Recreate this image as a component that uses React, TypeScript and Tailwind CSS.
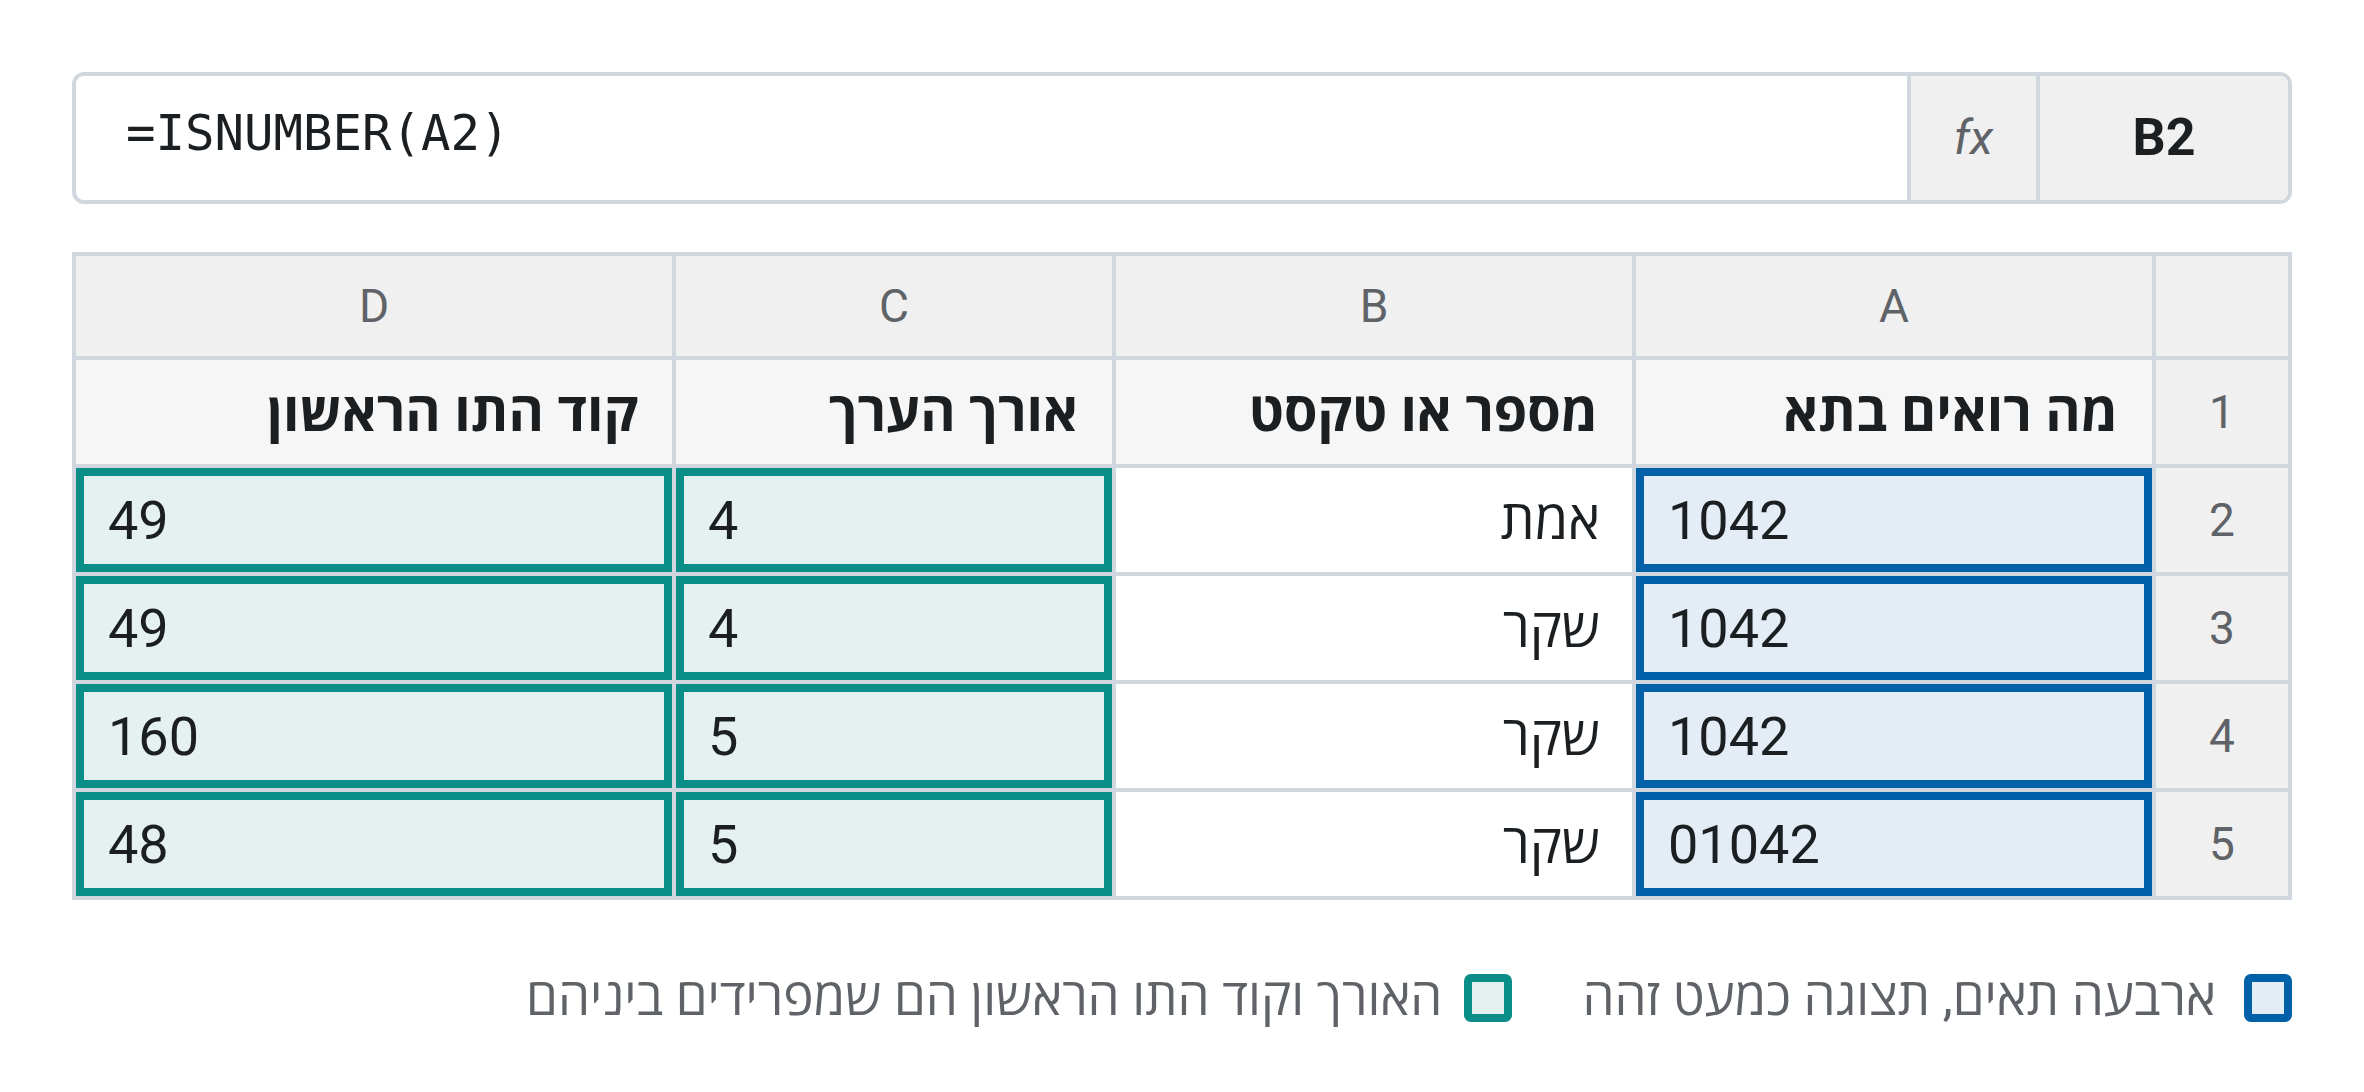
const teal = "border-[8px] border-[#0b8e88] bg-[#e5f1f1]";
const blue = "border-[8px] border-[#0061a8] bg-[#e4ecf5]";

type Row = { n: number; a: string; b: string; c: string; d: string };

const rows: Row[] = [
  { n: 2, a: "1042", b: "אמת", c: "4", d: "49" },
  { n: 3, a: "1042", b: "שקר", c: "4", d: "49" },
  { n: 4, a: "1042", b: "שקר", c: "5", d: "160" },
  { n: 5, a: "01042", b: "שקר", c: "5", d: "48" },
];

const letters = ["A", "B", "C", "D"];
const titles = ["מה רואים בתא", "מספר או טקסט", "אורך הערך", "קוד התו הראשון"];

export default function App() {
  return (
    <div
      dir="rtl"
      className="min-h-screen bg-white px-[72px] pt-[72px] font-['Roboto','Open_Sans',sans-serif] text-[#1b1f22]"
    >
      {/* formula bar */}
      <div className="flex h-[132px] overflow-hidden rounded-[12px] border-[4px] border-[#d0d7de]">
        <div className="flex w-[252px] items-center justify-center border-l-[4px] border-[#d0d7de] bg-[#f0f0f0] text-[52px] font-bold">
          B2
        </div>
        <div className="flex w-[129px] items-center justify-center border-l-[4px] border-[#d0d7de] bg-[#f0f0f0] text-[48px] italic text-[#5f6368]">
          fx
        </div>
        <div
          dir="ltr"
          className="flex flex-1 items-center pb-[8px] pl-[50px] font-['DejaVu_Sans_Mono',monospace] text-[49px]"
        >
          =ISNUMBER(A2)
        </div>
      </div>

      {/* sheet */}
      <div className="mt-[48px] grid grid-cols-[132px_516px_516px_436px_596px] grid-rows-[100px_repeat(5,104px)] gap-[4px] bg-[#d0d7de] p-[4px]">
        <div className="bg-[#f0f0f0]" />
        {letters.map((l) => (
          <div
            key={l}
            className="flex items-center justify-center bg-[#f0f0f0] text-[46px] text-[#5f6368]"
          >
            {l}
          </div>
        ))}

        <div className="flex items-center justify-center bg-[#f0f0f0] text-[46px] text-[#5f6368]">
          1
        </div>
        {titles.map((t) => (
          <div
            key={t}
            className="flex items-center bg-[#f6f6f6] px-[34px] text-[54px] font-bold"
          >
            {t}
          </div>
        ))}

        {rows.map((r) => (
          <>
            <div
              key={`n${r.n}`}
              className="flex items-center justify-center bg-[#f0f0f0] text-[46px] text-[#5f6368]"
            >
              {r.n}
            </div>
            <div dir="ltr" className={`flex items-center px-[24px] text-[54px] ${blue}`}>
              {r.a}
            </div>
            <div className="flex items-center bg-white px-[32px] text-[54px]">{r.b}</div>
            <div dir="ltr" className={`flex items-center px-[24px] text-[54px] ${teal}`}>
              {r.c}
            </div>
            <div dir="ltr" className={`flex items-center px-[24px] text-[54px] ${teal}`}>
              {r.d}
            </div>
          </>
        ))}
      </div>

      {/* legend */}
      <div className="mt-[60px] flex items-center gap-[70px] text-[51px] text-[#5f6368]">
        <div className="flex items-center gap-[28px]">
          <span className="h-[48px] w-[48px] rounded-[7px] border-[8px] border-[#0061a8] bg-[#e4ecf5]" />
          <span>ארבעה תאים, תצוגה כמעט זהה</span>
        </div>
        <div className="flex items-center gap-[22px]">
          <span className="h-[48px] w-[48px] rounded-[7px] border-[8px] border-[#0b8e88] bg-[#e5f1f1]" />
          <span>האורך וקוד התו הראשון הם שמפרידים ביניהם</span>
        </div>
      </div>
    </div>
  );
}
